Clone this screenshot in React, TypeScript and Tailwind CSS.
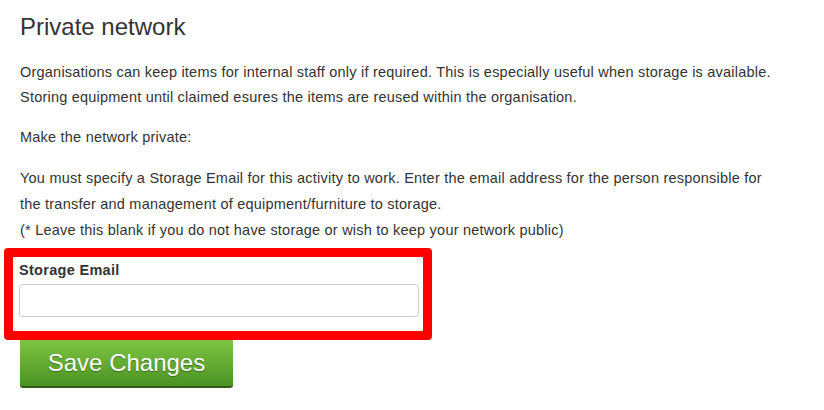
export default function App() {
  return (
    <div className="min-h-[410px] w-[824px] bg-white px-5 font-['Liberation_Sans',Arial,sans-serif] text-[#333]">
      <h2 className="pt-[12px] text-[24px] leading-[30px] text-[#333]">Private network</h2>

      <div className="text-[14.5px] tracking-[0.22px]">
        <p className="mt-[18px] leading-[25px]">
          Organisations can keep items for internal staff only if required. This is especially useful when storage is available.
          <br />
          Storing equipment until claimed esures the items are reused within the organisation.
        </p>

        <p className="mt-[15px] leading-[25px]">Make the network private:</p>

        <p className="mt-[15px] leading-[26px]">
          You must specify a Storage Email for this activity to work. Enter the email address for the person responsible for
          <br />
          the transfer and management of equipment/furniture to storage.
          <br />
          (* Leave this blank if you do not have storage or wish to keep your network public)
        </p>
      </div>

      {/* highlighted form group */}
      <div className="mt-[5px] ml-[-16px] w-[428px] rounded-[4px] border-[9px] border-[#ff0000] pt-[4px] pr-[4px] pb-[14px] pl-[6px]">
        <label className="block text-[14.5px] font-bold leading-[18px] tracking-[0.3px] text-[#333]">Storage Email</label>
        <input
          type="email"
          className="mt-[5px] block h-[33px] w-full rounded-[4px] border border-[#ccc] bg-white px-3 text-[14px] outline-none"
        />
      </div>

      <button className="block h-[48px] w-[213px] rounded-b-[3px] border-b-2 border-[#2f5e14] bg-gradient-to-b from-[#7ec543] to-[#4a9323] text-[24px] leading-[46px] text-white [text-shadow:0_1px_1px_rgba(0,0,0,0.35)]">
        Save Changes
      </button>
    </div>
  );
}
